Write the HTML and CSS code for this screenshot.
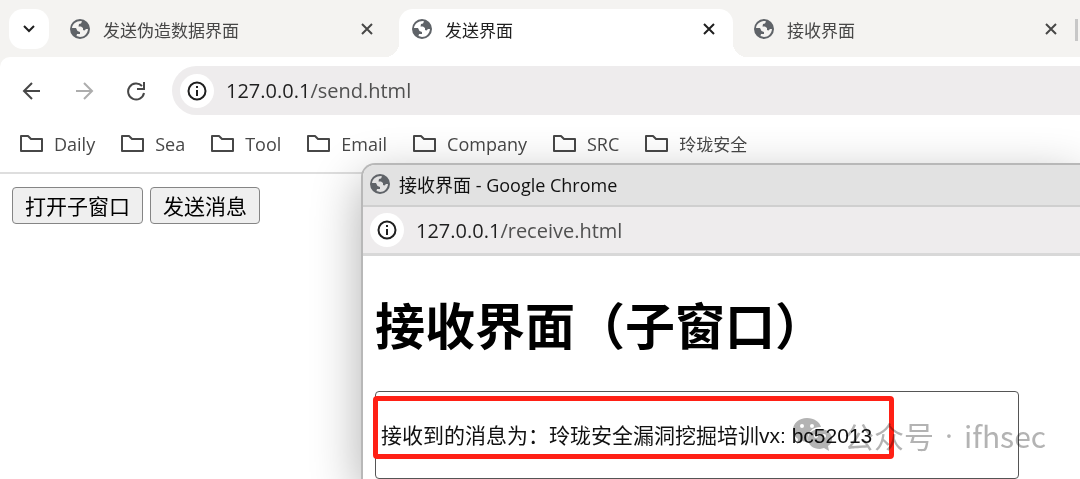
FILE: index.html
```html
<!DOCTYPE html>
<html lang="zh-CN">
<head>
    <meta charset="UTF-8">
    <meta name="viewport" content="width=device-width, initial-scale=1.0">
    <title>发送界面</title>
    <link rel="stylesheet" href="styles.css">
</head>
<body>
    <svg class="symbols" aria-hidden="true">
        <symbol id="globe" viewBox="0 0 22 22">
            <path fill="currentColor" fill-rule="evenodd" d="M11 1a10 10 0 1 0 0 20 10 10 0 0 0 0-20zM3 10C3.500 6 7 3 12 3l1 .5-1 2-2 .5-.5 2.500h2.500l2 1.500v2l1.500.5 1.500-1.500h2c-.5 4.500-3.500 8-8 8l-3.500-1 .5-2h3V14l-2.500-1L7 10z"/>
        </symbol>
        <symbol id="close" viewBox="0 0 14 14">
            <path d="M2 2l10 10M12 2L2 12" fill="none" stroke="currentColor" stroke-width="2"/>
        </symbol>
        <symbol id="info" viewBox="0 0 22 22">
            <circle cx="11" cy="11" r="8.500" fill="none" stroke="currentColor" stroke-width="2"/>
            <path d="M11 10v6M11 6v2" fill="none" stroke="currentColor" stroke-width="2"/>
        </symbol>
        <symbol id="folder" viewBox="0 0 24 20">
            <path d="M1 2h7l3 3h11v12H1z" fill="none" stroke="currentColor" stroke-width="2" stroke-linejoin="round"/>
        </symbol>
    </svg>

    <div class="browser">
        <div class="tabs">
            <button class="tab-search" aria-label="搜索标签页">
                <svg width="14" height="10" viewBox="0 0 14 10"><path d="M2 2l5 5 5-5" fill="none" stroke="currentColor" stroke-width="2"/></svg>
            </button>
            <div class="tab">
                <svg class="globe"><use href="#globe"/></svg>
                <span class="tab-title">发送伪造数据界面</span>
                <button class="tab-close" aria-label="关闭"><svg><use href="#close"/></svg></button>
            </div>
            <div class="tab active">
                <svg class="globe"><use href="#globe"/></svg>
                <span class="tab-title">发送界面</span>
                <button class="tab-close" aria-label="关闭"><svg><use href="#close"/></svg></button>
            </div>
            <div class="tab last">
                <svg class="globe"><use href="#globe"/></svg>
                <span class="tab-title">接收界面</span>
                <button class="tab-close" aria-label="关闭"><svg><use href="#close"/></svg></button>
            </div>
        </div>

        <div class="toolbar">
            <button class="nav" aria-label="后退">
                <svg viewBox="0 0 20 20"><path d="M18 10H3M10 2l-8 8 8 8" fill="none" stroke="currentColor" stroke-width="2"/></svg>
            </button>
            <button class="nav" aria-label="前进" disabled>
                <svg viewBox="0 0 20 20"><path d="M2 10h15M10 2l8 8-8 8" fill="none" stroke="currentColor" stroke-width="2"/></svg>
            </button>
            <button class="nav" aria-label="重新加载">
                <svg viewBox="0 0 20 20"><path d="M16 5a8 8 0 1 0 2 7M18 1v7h-7" fill="none" stroke="currentColor" stroke-width="2"/></svg>
            </button>
            <div class="address">
                <span class="info"><svg><use href="#info"/></svg></span>
                <span class="url">127.0.0.1<span class="path">/send.html</span></span>
            </div>
        </div>

        <nav class="bookmarks">
            <a href="#"><svg><use href="#folder"/></svg>Daily</a>
            <a href="#"><svg><use href="#folder"/></svg>Sea</a>
            <a href="#"><svg><use href="#folder"/></svg>Tool</a>
            <a href="#"><svg><use href="#folder"/></svg>Email</a>
            <a href="#"><svg><use href="#folder"/></svg>Company</a>
            <a href="#"><svg><use href="#folder"/></svg>SRC</a>
            <a href="#" class="cjk"><svg><use href="#folder"/></svg>玲珑安全</a>
        </nav>

        <main class="page">
            <button class="btn">打开子窗口</button>
            <button class="btn">发送消息</button>
        </main>
    </div>

    <!-- 子窗口 -->
    <section class="popup">
        <header class="popup-title">
            <svg class="globe"><use href="#globe"/></svg>
            <span>接收界面 - Google Chrome</span>
        </header>
        <div class="popup-address">
            <span class="info"><svg><use href="#info"/></svg></span>
            <span class="url">127.0.0.1<span class="path">/receive.html</span></span>
        </div>
        <div class="popup-page">
            <h1>接收界面（子窗口）</h1>
            <div class="field">
                <input type="text" class="message" aria-label="消息" value="接收到的消息为：玲珑安全漏洞挖掘培训vx: bc52013">
                <div class="highlight"></div>
                <div class="watermark">
                    <svg width="40" height="34" viewBox="0 0 40 34">
                        <path fill="currentColor" fill-rule="evenodd" d="M14 0C6 0 0 5 0 12c0 4 2 7 5 9l-1 5 5-3 5 1h1C13 15 19 9 28 9 27 4 21 0 14 0zM9 6a2 2 0 1 1 0 4 2 2 0 0 1 0-4zM19 6a2 2 0 1 1 0 4 2 2 0 0 1 0-4z"/>
                        <path fill="currentColor" fill-rule="evenodd" d="M27 11c-7 0-12 4-12 10s5 10 12 10l4-1 5 3-1-5c3-2 4-4 4-7 0-6-5-10-12-10zM23 16a2 2 0 1 1 0 4 2 2 0 0 1 0-4zM31 16a2 2 0 1 1 0 4 2 2 0 0 1 0-4z"/>
                    </svg>
                    <span>公众号</span>
                    <span class="dot">·</span>
                    <span>ifhsec</span>
                </div>
            </div>
        </div>
    </section>
</body>
</html>
```
FILE: styles.css
```css
* {
    box-sizing: border-box;
}
body {
    margin: 0;
    min-height: 100vh;
    position: relative;
    overflow: hidden;
    background-color: #fff;
    color: #1f1f1f;
    font-family: "Open Sans", "Noto Sans CJK SC", sans-serif;
    font-size: 18px;
}
button {
    font-family: inherit;
    padding: 0;
    border: none;
    background: none;
    color: inherit;
}
svg {
    display: block;
    flex: none;
}
.symbols {
    position: absolute;
    width: 0;
    height: 0;
}
.globe {
    width: 22px;
    height: 22px;
    color: #5f6368;
}

/* Вкладки */
.browser {
    background: linear-gradient(#f4f3f1 70px, #fff 70px);
}
.tabs {
    display: flex;
    gap: 8px;
    height: 57px;
    padding: 9px 0 0 9px;
}
.tab-search {
    flex: none;
    display: flex;
    align-items: center;
    justify-content: center;
    width: 40px;
    height: 40px;
    border-radius: 14px;
    background-color: #fff;
}
.tab {
    position: relative;
    flex: none;
    display: flex;
    align-items: center;
    gap: 12px;
    width: 334px;
    padding: 0 17px 8px 12px;
    color: #474747;
    font-size: 17px;
}
.tab.active {
    border-radius: 14px 14px 0 0;
    background-color: #fff;
    color: #1f1f1f;
}
.tab.active::before,
.tab.active::after {
    content: "";
    position: absolute;
    bottom: 0;
    width: 14px;
    height: 14px;
}
.tab.active::before {
    right: 100%;
    background: radial-gradient(circle at 0 0, transparent 14px, #fff 14px);
}
.tab.active::after {
    left: 100%;
    background: radial-gradient(circle at 100% 0, transparent 14px, #fff 14px);
}
.tab.last::after {
    content: "";
    position: absolute;
    top: 10px;
    left: 100%;
    width: 3px;
    height: 22px;
    background-color: #c7c7c7;
}
.tab-title {
    flex: 1;
}
.tab-close svg {
    width: 14px;
    height: 14px;
}

/* Адресная строка */
.toolbar {
    display: flex;
    align-items: center;
    gap: 32px;
    height: 58px;
    padding: 9px 0 0 22px;
    border-radius: 10px 0 0 0;
    background-color: #fff;
}
.nav svg {
    width: 20px;
    height: 20px;
    color: #474747;
}
.nav:disabled svg {
    color: #adadad;
}
.address {
    flex: 1;
    display: flex;
    align-items: center;
    gap: 12px;
    height: 49px;
    margin-left: -6px;
    padding-left: 8px;
    border-radius: 25px 0 0 25px;
    background-color: #eeeced;
}
.info {
    display: flex;
    align-items: center;
    justify-content: center;
    width: 34px;
    height: 34px;
    border-radius: 50%;
    background-color: #fff;
}
.info svg {
    width: 22px;
    height: 22px;
}
.url {
    font-size: 20px;
}
.path {
    color: #505050;
}

/* Закладки */
.bookmarks {
    display: flex;
    align-items: center;
    gap: 26px;
    height: 59px;
    padding: 0 20px;
    border-bottom: 2px solid #dedede;
}
.bookmarks a {
    display: flex;
    align-items: center;
    gap: 10px;
    color: #474747;
    font-size: 18px;
    text-decoration: none;
}
.bookmarks .cjk {
    font-size: 17px;
}
.bookmarks svg {
    width: 24px;
    height: 20px;
}

.page {
    display: flex;
    gap: 7px;
    padding: 13px 12px;
}
.btn {
    height: 37px;
    padding: 0 12px;
    border: 1px solid #858585;
    border-radius: 4px;
    background-color: #efefef;
    color: #000;
    font-size: 21px;
    line-height: 32px;
}

/* Дочернее окно поверх страницы */
.popup {
    position: absolute;
    top: 163px;
    left: 361px;
    right: 0;
    bottom: 0;
    border: 2px solid #b8b8b8;
    border-width: 2px 0 0 2px;
    border-radius: 14px 0 0 0;
    background-color: #fff;
    box-shadow: 0 16px 50px rgba(0, 0, 0, 0.32);
}
.popup-title {
    display: flex;
    align-items: center;
    gap: 8px;
    height: 42px;
    padding: 0 0 2px 6px;
    border-bottom: 2px solid #cfcfcf;
    border-radius: 12px 0 0 0;
    background-color: #e2e2e2;
    color: #111;
    font-size: 18px;
}
.popup-address {
    display: flex;
    align-items: center;
    gap: 12px;
    height: 49px;
    padding-left: 7px;
    border-bottom: 3px solid #d8d8d8;
    background-color: #eeeced;
}
.popup-page {
    padding: 0 12px;
}
h1 {
    margin: 30px 0 31px;
    color: #000;
    font-family: "Noto Sans CJK SC", sans-serif;
    font-size: 50px;
    font-weight: 700;
    line-height: 74px;
}
.field {
    position: relative;
    max-width: 644px;
}
.message {
    display: block;
    width: 100%;
    height: 88px;
    padding: 0 5px 3px;
    border: 1px solid #555;
    border-radius: 4px;
    background-color: #fff;
    color: #111;
    font-family: "Liberation Sans", "Noto Sans CJK SC", sans-serif;
    font-size: 21px;
}
.highlight {
    position: absolute;
    top: 5px;
    left: -2px;
    width: 521px;
    height: 63px;
    border: 5px solid #ff2015;
    border-radius: 4px;
}
.watermark {
    position: absolute;
    top: 24px;
    left: 418px;
    display: flex;
    align-items: center;
    gap: 11px;
    color: #b3b3b3;
    font-family: "Noto Sans CJK SC", sans-serif;
    font-size: 30px;
    line-height: 40px;
    white-space: nowrap;
    mix-blend-mode: multiply;
}
.watermark .dot {
    font-family: "Open Sans", sans-serif;
}
```
